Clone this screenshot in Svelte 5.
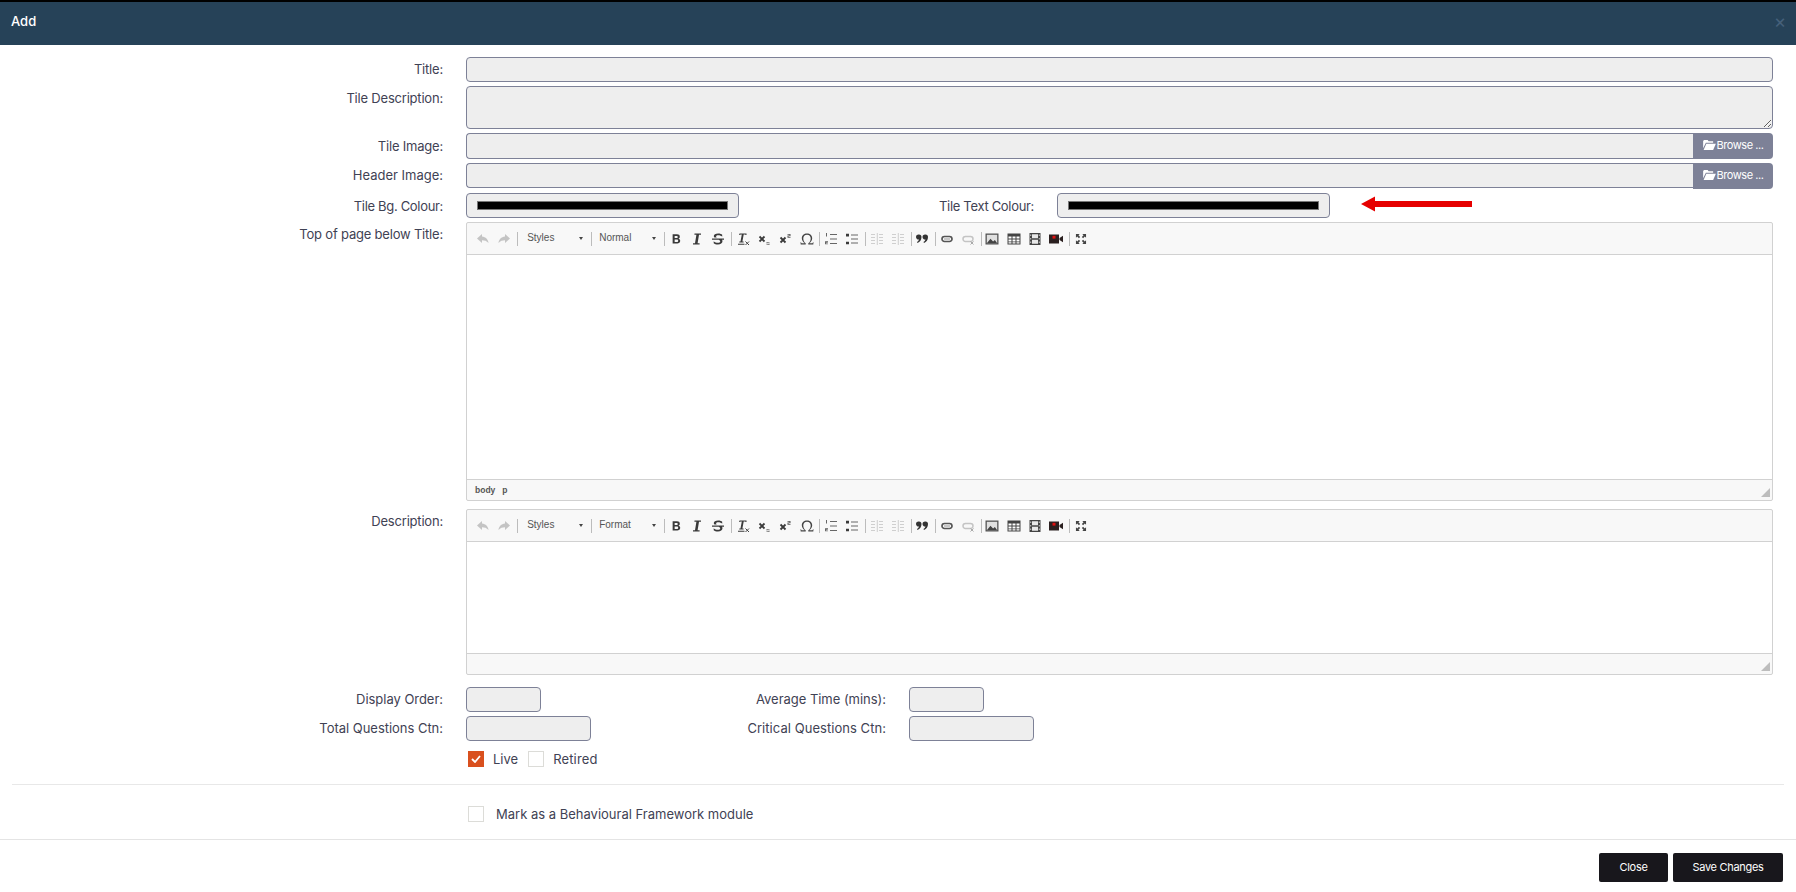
<script>
  const L = (d, extra = {}) => ({ d, s: '#444', w: 1.4, f: 'none', ...extra });
  const F = (d, extra = {}) => ({ d, f: '#444', s: 'none', w: 0, ...extra });
  const G = '#c4c4c4';
  const pill = 'M5.5 5.5h5a2.5 2.5 0 0 1 0 5h-5a2.5 2.5 0 0 1 0-5z';
  const icons = {
    undo: [F('M7 3 2 7.5 7 12V9.3c2.6 0 4.6.6 6.5 2.7-.4-3.6-2.7-6-6.5-6.4z', { f: G })],
    redo: [F('M9 3l5 4.5L9 12V9.3c-2.6 0-4.6.6-6.5 2.7.4-3.6 2.7-6 6.5-6.4z', { f: G })],
    bold: [F('M4 2.5h5.2c2 0 3.3 1 3.3 2.8 0 1.1-.6 1.9-1.5 2.3 1.2.3 2 1.3 2 2.6 0 2-1.5 3.2-3.6 3.2H4zM6.4 4.3v2.6h2.3c.9 0 1.4-.5 1.4-1.3s-.5-1.3-1.4-1.3zM6.4 8.6v3H9c1 0 1.6-.6 1.6-1.5S10 8.600 9 8.600z', { f: '#3a3a3a' })],
    italic: [F('M5.5 2.5H12v1.300h-2L8.600 12.200h2v1.300H4v-1.300h2L7.400 3.800h-2z', { f: '#3a3a3a' })],
    strike: [F('M8.200 2.500c2 0 3.400.7 4 1.300v1.900c-1-.8-2.300-1.400-3.900-1.400-1.300 0-2.200.5-2.200 1.300 0 .4.2.7.6 1H4.400C4 6.200 3.800 5.700 3.800 5.100c0-1.600 1.800-2.600 4.400-2.600zM2 7.600h12v1.100h-2c.3.400.5.900.5 1.400 0 2-1.900 3.400-4.500 3.400-1.900 0-3.500-.6-4.300-1.300v-2c1.100 1 2.600 1.600 4.200 1.600 1.400 0 2.300-.6 2.300-1.400 0-.7-.5-1.100-1.400-1.700H2z', { f: '#3a3a3a' })],
    clear: [F('M4.500 2.500h7v1.600h-.8l-.5-.6H8.700L7.400 10.600h1.200v1H4.300v-1h1.200L6.800 3.500H5.600l-.7.6H4.100zM3 12.800h6.500v1H3z', { f: '#3a3a3a' }), L('M10.500 10.500l3.500 3.500M14 10.500l-3.500 3.500', { w: 1 })],
    sub: [L('M3.500 5.500l5 5M8.500 5.500l-5 5', { w: 1.800, s: '#3a3a3a' }), F('M10.500 11h3v.8h-2v.8h2v1.400h-3v-.8h2v-.8h-2z', { f: '#777' })],
    sup: [L('M3.500 6.500l5 5M8.500 6.500l-5 5', { w: 1.800, s: '#3a3a3a' }), F('M10.500 3h3v2.200h-2v.8h2v.8h-3V4.600h2v-.8h-2z', { f: '#555' })],
    omega: [F('M8 2.500c3 0 5.200 1.900 5.200 4.800 0 2.300-1.300 3.700-2.800 4.900h3.100l.5-1h.5l-.2 2.300H9.300v-1.200c1.500-1 2.400-2.600 2.400-5 0-2.100-1.400-3.600-3.700-3.600S4.300 5.200 4.300 7.300c0 2.400.9 4 2.400 5v1.200H1.700l-.2-2.300H2l.5 1h3.100C4.100 11 2.800 9.600 2.800 7.300c0-2.900 2.200-4.800 5.200-4.800z', { f: '#444' })],
    ol: [F('M7 3h7v1H7zM7 7.500h7v1H7zM7 12h7v1H7z', { f: '#666' }), F('M3 2h1v3.500H3zM2 10h2.800v1.800H3.100v.7h1.800v.8H2v-2.200h1.800v-.4H2z', { f: '#666' })],
    ul: [F('M7 3.500h7v1H7zM7 7.500h7v1H7zM7 11.500h7v1H7z', { f: '#666' }), F('M2 2.800h3v2.600H2zM2 10.700h3v2.600H2z', { f: '#3a3a3a' })],
    outdent: [F('M2 3h4v1H2zM2 6h4v1H2zM2 9h4v1H2zM2 12h4v1H2zM10 3h4v1h-4zM10 6h4v1h-4zM10 9h4v1h-4zM10 12h4v1h-4zM7.800 2h1v12h-1z', { f: '#cfcfcf' })],
    indent: [F('M2 3h4v1H2zM2 6h4v1H2zM2 9h4v1H2zM2 12h4v1H2zM10 3h4v1h-4zM10 6h4v1h-4zM10 9h4v1h-4zM10 12h4v1h-4zM7.800 2h1v12h-1z', { f: '#cfcfcf' })],
    quote: [F('M5 3.500A2.500 2.500 0 0 1 7.500 6c0 3-1.500 5-4 6l-.5-1c1-.6 1.700-1.500 2-2.600a2.500 2.500 0 1 1 0-4.900zM11.500 3.500A2.500 2.500 0 0 1 14 6c0 3-1.500 5-4 6l-.5-1c1-.6 1.700-1.500 2-2.600a2.500 2.500 0 1 1 0-4.900z', { f: '#333' })],
    link: [L(pill, { w: 1.700, s: '#555' }), L('M5 8h6', { w: 1, s: '#999' })],
    unlink: [L(pill, { w: 1.500, s: G }), L('M10.500 10.500l3 3M13.500 10.500l-3 3', { w: 1, s: '#aaa' })],
    image: [F('M1.500 2.500h13v11h-13z', { f: '#555' }), F('M2.800 3.800h10.400v8.400H2.800z', { f: '#e0e0e0' }), F('M2.800 12.200 6.500 7.800l2.600 2.600 1.800-1.400 2.300 3.200z', { f: '#444' })],
    table: [F('M1.500 2.500h13v11h-13z', { f: '#444' }), F('M2.500 5.500h3v2h-3zM6.500 5.500h3v2h-3zM10.500 5.500h3v2h-3zM2.500 8.500h3v2h-3zM6.500 8.500h3v2h-3zM10.500 8.500h3v2h-3zM2.500 11.300h3v1.300h-3zM6.500 11.300h3v1.300h-3zM10.500 11.300h3v1.300h-3z', { f: '#fff' })],
    film: [F('M2.500 2h11v12h-11z', { f: '#444' }), F('M5 3.200h6v4.100H5zM5 8.700h6v4.100H5z', { f: '#e8e8e8' }), F('M3.300 3.500h.9v1.500h-.9zM3.300 7h.9v1.500h-.9zM3.300 10.500h.9V12h-.9zM11.800 3.500h.9v1.500h-.9zM11.800 7h.9v1.500h-.9zM11.800 10.500h.9V12h-.9z', { f: '#ddd' })],
    video: [F('M1 3.500h10v9H1zM11.500 7l3.500-2.300v6.600L11.500 9z', { f: '#2b2020' }), F('M4.500 4.800h3v2.800h-3z', { f: '#e01010' })],
    max: [F('M2 2h4.500L5 3.500l2 2L5.500 7l-2-2L2 6.500zM14 2v4.500L12.500 5l-2 2L9 5.500l2-2L9.500 2zM2 14V9.500L3.500 11l2-2L7 10.500l-2 2L6.500 14zM14 14H9.500l1.500-1.500-2-2L10.500 9l2 2L14 9.500z', { f: '#444' })]
  };
  const small = new Set(['bold', 'max']);
  const cl = (label) => [
    ['undo','redo'], { combo: 'Styles', w: 71, p: 9 }, { combo: label, w: 70, p: 7 },
    ['bold','italic','strike'], ['clear','sub','sup','omega'], ['ol','ul'], ['outdent','indent'],
    ['quote'], ['link','unlink'], ['image','table','film','video'], ['max']
  ];
</script>

{#snippet toolbar(label)}
  <div class="toolbar">
    {#each cl(label) as group}
      {#if group.combo}
        <div class="combo" style="width:{group.w}px;padding-left:{group.p}px"><span>{group.combo}</span><i></i></div>
      {:else}
        {#each group as name}
          <span class="tb">
            <svg width="16" height="16" viewBox={small.has(name) ? '-1.5 -1.5 19 19' : '0 0 16 16'}>
              {#each icons[name] as p}
                <path d={p.d} fill={p.f} stroke={p.s} stroke-width={p.w} />
              {/each}
            </svg>
          </span>
        {/each}
      {/if}
      <b class="sep"></b>
    {/each}
  </div>
{/snippet}

{#snippet grip()}
  <svg class="grip" width="9" height="9" viewBox="0 0 9 9"><path d="M9 0v9H0z" fill="#bdbdbd" /></svg>
{/snippet}

{#snippet browse()}
  <button class="browse" type="button">
    <svg width="13" height="10" viewBox="0 0 14 11"><path d="M1 0h4l1 1.300h5v1.700H3L0 9V1zM3.500 4H14l-3 7H0.500z" fill="#fff" /></svg>
    Browse ...
  </button>
{/snippet}

<div class="modal">
  <header class="head">
    <span class="title">Add</span>
    <span class="x">×</span>
  </header>

  <main class="body">
    <div class="row"><label for="t1">Title:</label><input id="t1" class="full" /></div>
    <div class="row r-area"><label for="t2">Tile Description:</label><textarea id="t2" class="full"></textarea></div>
    <div class="row r-img"><label for="t3">Tile Image:</label><div class="group"><input id="t3" />{@render browse()}</div></div>
    <div class="row r-img2"><label for="t4">Header Image:</label><div class="group"><input id="t4" />{@render browse()}</div></div>
    <div class="row r-color">
      <label for="c1">Tile Bg. Colour:</label>
      <input id="c1" class="color" type="color" value="#000000" />
      <label for="c2">Tile Text Colour:</label>
      <input id="c2" class="color" type="color" value="#000000" />
      <svg class="arrow" width="111" height="16" viewBox="0 0 111 16"><path d="M0 8 14 .5V5h97v6H14v4.500z" fill="#e60000" /></svg>
    </div>

    <div class="row r-ed1">
      <span class="lab">Top of page below Title:</span>
      <div class="editor">
        {@render toolbar('Normal')}
        <div class="content c1"></div>
        <div class="status"><span>body</span><span>p</span>{@render grip()}</div>
      </div>
    </div>

    <div class="row r-ed2">
      <span class="lab">Description:</span>
      <div class="editor">
        {@render toolbar('Format')}
        <div class="content c2"></div>
        <div class="status">{@render grip()}</div>
      </div>
    </div>

    <div class="row r-num">
      <label for="n1">Display Order:</label>
      <input id="n1" class="short" />
      <label for="n2">Average Time (mins):</label>
      <input id="n2" class="short" />
    </div>
    <div class="row r-num r-last">
      <label for="n3">Total Questions Ctn:</label>
      <input id="n3" class="mid" />
      <label class="wide" for="n4">Critical Questions Ctn:</label>
      <input id="n4" class="mid" />
    </div>

    <div class="checks">
      <span class="box on"><svg width="10" height="8" viewBox="0 0 10 8"><path d="M1 4l3 3 5-6" fill="none" stroke="#fff" stroke-width="1.800" /></svg></span>
      <span class="ck live">Live</span>
      <span class="box"></span>
      <span class="ck retired">Retired</span>
    </div>

    <hr />

    <div class="checks mark">
      <span class="box"></span>
      <span class="ck">Mark as a Behavioural Framework module</span>
    </div>
  </main>

  <footer class="foot">
    <button class="btn close" type="button">Close</button>
    <button class="btn save" type="button">Save Changes</button>
  </footer>
</div>

<style>
  :global(body) { margin: 0; background: #fff; }
  .modal {
    width: 1796px; height: 892px; overflow: hidden; display: flex; flex-direction: column;
    font-family: Inter, "Liberation Sans", sans-serif; font-size: 13px; color: #3f4254; letter-spacing: -0.2px;
  }
  .head {
    height: 45px; box-sizing: border-box; background: #264258; border-top: 2px solid #000; color: #fff;
    display: flex; align-items: center; justify-content: space-between; padding: 0 10px 5px 11px; flex: none;
  }
  .title { font-size: 13px; font-weight: 500; letter-spacing: 0; }
  .x { color: #45607a; font-size: 19px; line-height: 19px; }
  .body { padding: 12px 23px 0 12px; flex: 1; }
  .row { display: grid; grid-template-columns: 431px 1fr; column-gap: 23px; align-items: start; margin-bottom: 4px; }
  .row label, .lab { text-align: right; padding-top: 5px; line-height: 15px; white-space: nowrap; }
  input:not(.color), textarea {
    box-sizing: border-box; height: 25px; background: #eee; border: 1px solid #7d8197; border-radius: 4px;
    margin: 0; padding: 0 8px; outline: none; display: block;
  }
  .full { width: 100%; }
  textarea.full { height: 43px; resize: vertical; }
  .group { display: flex; height: 26px; }
  .group input { flex: 1; height: 26px !important; border-radius: 4px 0 0 4px !important; border-right: 0 !important; }
  .r-img label { padding-top: 6px; }
  .r-img2 { margin-bottom: 5px; }
  .r-img2 label { letter-spacing: 0; }
  .r-img2 .group { height: 25px; }
  .r-img2 .group input { height: 25px !important; }
  .browse {
    width: 80px; height: 26px; background: #7d8197; border: 0; border-radius: 0 4px 4px 0; color: #fff; font: inherit; font-size: 11px;
    display: flex; align-items: center; justify-content: center; gap: 1px; padding: 0 0 3px; flex: none; letter-spacing: -0.45px;
  }
  .r-color { grid-template-columns: 431px 273px 272px 273px 1fr; }
  .r-color label { padding-top: 6px; letter-spacing: -0.32px; }
  .color {
    box-sizing: border-box; width: 273px; height: 25px; padding: 7px 10px; background: #eee; border: 1px solid #7d8197; border-radius: 4px; margin: 0;
  }
  .color::-webkit-color-swatch-wrapper { padding: 0; }
  .color::-webkit-color-swatch { border: 1px solid #777; border-radius: 0; background: #000; }
  .arrow { margin: 3px 0 0 8px; }
  .r-ed1 { margin-bottom: 8px; }
  .r-ed2 { margin-bottom: 12px; }
  .editor { border: 1px solid #d1d1d1; border-radius: 2px; background: #f8f8f8; font-family: "Liberation Sans", Arial, sans-serif; letter-spacing: 0; display: flex; flex-direction: column; }
  .toolbar { height: 31px; border-bottom: 1px solid #d1d1d1; display: flex; align-items: center; padding-left: 5.5px; }
  .tb { width: 21.33px; height: 20px; display: flex; align-items: center; justify-content: center; flex: none; }
  .sep { width: 1px; height: 14px; background: #bcbcbc; margin-left: 2px; flex: none; }
  .sep:last-child { display: none; }
  .combo { display: flex; align-items: center; justify-content: space-between; box-sizing: border-box; padding-right: 6px; padding-bottom: 2px; font-size: 10px; color: #555; flex: none; height: 20px; }
  .combo i { width: 0; height: 0; border: 2px solid transparent; border-top: 3px solid #444; border-bottom: 0; margin-top: 2px; }
  .content { background: #fff; border-bottom: 1px solid #d1d1d1; }
  .c1 { height: 224px; }
  .c2 { height: 111px; }
  .status { height: 20px; position: relative; display: flex; align-items: center; gap: 7px; padding-left: 8px; font-size: 8.5px; font-weight: 700; color: #555; }
  .grip { position: absolute; right: 2px; bottom: 3px; }
  .r-num { grid-template-columns: 431px 125px 272px 125px 1fr; }
  .r-num label { letter-spacing: -0.03px; }
  .r-num label.wide { letter-spacing: 0.05px; }
  .short { width: 75px; }
  .mid { width: 125px; }
  .r-last { margin-bottom: 0; }
  .checks { display: flex; align-items: center; margin: 10px 0 0 456px; height: 16px; }
  .box { width: 16px; height: 16px; box-sizing: border-box; border: 1px solid #dcdcd8; display: flex; align-items: center; justify-content: center; flex: none; }
  .box.on { background: #d9501e; border-color: #d9501e; }
  .ck { margin: 0 9px; line-height: 16px; letter-spacing: 0; }
  .ck.live { margin-right: 10px; }
  .ck.retired { letter-spacing: 0.15px; }
  hr { border: 0; border-top: 1px solid #e8e8e8; margin: 17px -11px 0 0; }
  .mark { margin-top: 21px; }
  .mark .ck { margin-left: 12px; }
  .foot { height: 53px; border-top: 1px solid #e4e4e4; display: flex; justify-content: flex-end; align-items: flex-start; gap: 5px; padding: 13px 13px 0 0; flex: none; box-sizing: border-box; }
  .btn { height: 29px; background: #18171c; color: #fff; border: 0; border-radius: 2px; font: inherit; font-size: 11px; padding: 0 0 2px; letter-spacing: -0.3px; }
  .close { width: 69px; }
  .save { width: 110px; }
</style>
